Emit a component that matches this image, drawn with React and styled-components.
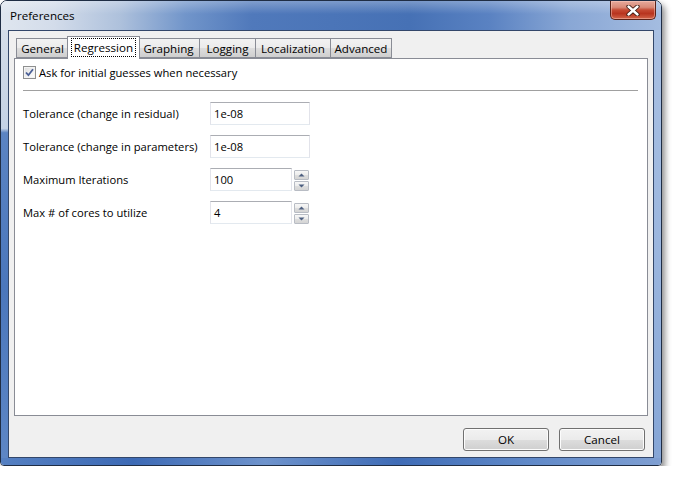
import React from "react";
import styled, { createGlobalStyle } from "styled-components";

const FS = "11.2px";

const Global = createGlobalStyle`
  html, body { margin: 0; padding: 0; background: #ffffff; }
  body { font-family: "Open Sans", "Noto Sans", "DejaVu Sans", sans-serif; font-size: ${FS}; color: #000; }
  * { box-sizing: border-box; }
`;

const Window = styled.div`
  width: 662px;
  height: 466px;
  display: flex;
  flex-direction: column;
  border: 1px solid #1f2d44;
  border-radius: 7px 7px 4px 4px;
  overflow: hidden;
  box-shadow: 3px 4px 6px rgba(0, 0, 0, 0.45);
`;

const TitleBar = styled.div`
  height: 29px;
  flex: none;
  display: flex;
  align-items: flex-start;
  justify-content: space-between;
  padding: 0 5px 0 9px;
  background:
    linear-gradient(to bottom, rgba(255,255,255,0.28), rgba(255,255,255,0) 45%),
    linear-gradient(to right, #dfe6ef 0%, #d3dcea 8%, #aec1dc 18%, #7195ca 28%, #5079bb 38%, #4671b5 62%, #5a82c2 74%, #89a7d5 86%, #a4bce0 100%);
`;

const Title = styled.span`
  line-height: 30px;
  font-size: 11.6px;
  color: #000;
`;

const CloseButton = styled.div`
  width: 46px;
  height: 19px;
  display: flex;
  align-items: center;
  justify-content: center;
  border: 1px solid #5b2218;
  border-top: none;
  border-radius: 0 0 5px 5px;
  background:
    linear-gradient(to bottom, #e7aa9c 0%, #d98a78 35%, #c54a33 50%, #b8341f 70%, #d2654a 100%);
  box-shadow: inset 0 0 0 1px rgba(255, 210, 200, 0.45);
`;

const Body = styled.div`
  flex: 1;
  display: flex;
`;

const SideFrame = styled.div`
  width: 7px;
  flex: none;
  background: ${(p) =>
    p.$side === "left"
      ? "linear-gradient(to bottom, #d4dde9 0%, #c4d2e5 23%, #5b84c3 24%, #4b77bc 60%, #5d86c5 100%)"
      : "linear-gradient(to bottom, #a9c0e2 0%, #9bb6de 50%, #86a6d6 100%)"};
`;

const BottomFrame = styled.div`
  height: 7px;
  flex: none;
  background: linear-gradient(to right, #5580c2 0%, #3d6ab5 20%, #6e93cc 40%, #3f6cb6 60%, #6089c8 80%, #7f9fd2 100%);
`;

const Client = styled.div`
  flex: 1;
  display: flex;
  flex-direction: column;
  background: #f0f0f0;
  border: 1px solid #33476a;
  padding: 5px 5px 6px 5px;
`;

const TabStrip = styled.div`
  display: flex;
  align-items: flex-end;
  padding-left: 2px;
  height: 22px;
  position: relative;
  z-index: 1;
`;

const Tab = styled.div`
  width: ${(p) => p.$w}px;
  height: ${(p) => (p.$active ? 23 : 20)}px;
  margin: ${(p) => (p.$active ? "0 -2px -1px -2px" : "0 0 0 -1px")};
  position: relative;
  z-index: ${(p) => (p.$active ? 2 : 1)};
  display: flex;
  align-items: ${(p) => (p.$active ? "flex-start" : "center")};
  justify-content: center;
  padding-top: ${(p) => (p.$active ? "1px" : "0")};
  border: 1px solid #898c95;
  border-bottom: ${(p) => (p.$active ? "none" : "1px solid #898c95")};
  background: ${(p) =>
    p.$active
      ? "#ffffff"
      : "linear-gradient(to bottom, #f2f2f2 0%, #ebebeb 50%, #dddddd 51%, #cfcfcf 100%)"};
  &:first-child { margin-left: 0; }
`;

const TabLabel = styled.span`
  font-size: 11.6px;
  line-height: 17px;
  padding: 0 2px;
  border: 1px dotted ${(p) => (p.$focus ? "#000" : "transparent")};
  white-space: nowrap;
`;

const Panel = styled.div`
  flex: 1;
  background: #ffffff;
  border: 1px solid #898c95;
  padding: 6px 9px 0 8px;
  display: flex;
  flex-direction: column;
`;

const CheckRow = styled.label`
  display: flex;
  align-items: center;
  gap: 3px;
  height: 14px;
`;

const CheckBox = styled.span`
  width: 13px;
  height: 13px;
  flex: none;
  border: 1px solid #8e8f8f;
  background: linear-gradient(135deg, #dcdcdc 0%, #f3f3f3 60%, #ffffff 100%);
  box-shadow: inset 0 0 0 1px #f4f4f4;
  display: flex;
  align-items: center;
  justify-content: center;
`;

const Separator = styled.div`
  height: 1px;
  margin-top: 11px;
  background: #a0a0a0;
`;

const Form = styled.div`
  margin-top: 11px;
  display: flex;
  flex-direction: column;
  gap: 10px;
`;

const Row = styled.div`
  display: flex;
  align-items: center;
  height: 23px;
`;

const Label = styled.span`
  width: 187px;
  flex: none;
  white-space: nowrap;
`;

const TextInput = styled.div`
  width: ${(p) => p.$w}px;
  height: 23px;
  border: 1px solid #e2e3ea;
  border-top-color: #abadb3;
  border-bottom-color: #e3e9ef;
  background: #fff;
  padding: 0 3px;
  display: flex;
  align-items: center;
  font-size: ${FS};
`;

const Spinner = styled.div`
  margin-left: 2px;
  display: flex;
  flex-direction: column;
  gap: 1px;
  padding-top: 1px;
`;

const SpinButton = styled.div`
  width: 15px;
  height: 10px;
  border: 1px solid #b8bcc4;
  border-radius: 1px;
  background: linear-gradient(to bottom, #f7f7f7 0%, #ececec 50%, #dedede 51%, #d4d4d4 100%);
  display: flex;
  align-items: center;
  justify-content: center;
`;

const ButtonBar = styled.div`
  display: flex;
  justify-content: flex-end;
  gap: 10px;
  margin-top: 12px;
  padding-right: 3px;
`;

const Button = styled.button`
  width: 86px;
  height: 23px;
  border: 1px solid #707070;
  border-radius: 3px;
  background: linear-gradient(to bottom, #f2f2f2 0%, #ebebeb 50%, #dddddd 51%, #cfcfcf 100%);
  box-shadow: inset 0 0 0 1px #fcfcfc;
  font-family: inherit;
  font-size: 11.6px;
  color: #000;
  padding: 0;
`;

const Arrow = ({ up }) => (
  <svg width="7" height="4" viewBox="0 0 7 4">
    <path d={up ? "M0.5 3.5 L3.5 0.5 L6.5 3.5 Z" : "M0.5 0.5 L3.5 3.5 L6.5 0.5 Z"} fill="#4d5f80" />
  </svg>
);

const tabs = [
  { label: "General", w: 53 },
  { label: "Regression", w: 73, active: true },
  { label: "Graphing", w: 63 },
  { label: "Logging", w: 57 },
  { label: "Localization", w: 76 },
  { label: "Advanced", w: 62 },
];

export default function App() {
  return (
    <>
      <Global />
      <Window>
        <TitleBar>
          <Title>Preferences</Title>
          <CloseButton>
            <svg width="14" height="11" viewBox="0 0 14 11">
              <path d="M2.5 1.5 L11.5 9.5 M11.5 1.5 L2.5 9.5" stroke="#3b1810" strokeWidth="4.2" strokeLinecap="round" />
              <path d="M2.5 1.5 L11.5 9.5 M11.5 1.5 L2.5 9.5" stroke="#ffffff" strokeWidth="2.4" strokeLinecap="round" />
            </svg>
          </CloseButton>
        </TitleBar>
        <Body>
          <SideFrame $side="left" />
          <Client>
            <TabStrip>
              {tabs.map((t) => (
                <Tab key={t.label} $w={t.w} $active={t.active}>
                  <TabLabel $focus={t.active}>{t.label}</TabLabel>
                </Tab>
              ))}
            </TabStrip>
            <Panel>
              <CheckRow>
                <CheckBox>
                  <svg width="9" height="9" viewBox="0 0 9 9">
                    <path d="M1 4.5 L3.4 7.2 L8 1.2" stroke="#4a5f96" strokeWidth="1.8" fill="none" />
                  </svg>
                </CheckBox>
                <span>Ask for initial guesses when necessary</span>
              </CheckRow>
              <Separator />
              <Form>
                <Row>
                  <Label>Tolerance (change in residual)</Label>
                  <TextInput $w={100}>1e-08</TextInput>
                </Row>
                <Row>
                  <Label>Tolerance (change in parameters)</Label>
                  <TextInput $w={100}>1e-08</TextInput>
                </Row>
                <Row>
                  <Label>Maximum Iterations</Label>
                  <TextInput $w={82}>100</TextInput>
                  <Spinner>
                    <SpinButton><Arrow up /></SpinButton>
                    <SpinButton><Arrow /></SpinButton>
                  </Spinner>
                </Row>
                <Row>
                  <Label>Max # of cores to utilize</Label>
                  <TextInput $w={82}>4</TextInput>
                  <Spinner>
                    <SpinButton><Arrow up /></SpinButton>
                    <SpinButton><Arrow /></SpinButton>
                  </Spinner>
                </Row>
              </Form>
            </Panel>
            <ButtonBar>
              <Button>OK</Button>
              <Button>Cancel</Button>
            </ButtonBar>
          </Client>
          <SideFrame $side="right" />
        </Body>
        <BottomFrame />
      </Window>
    </>
  );
}
